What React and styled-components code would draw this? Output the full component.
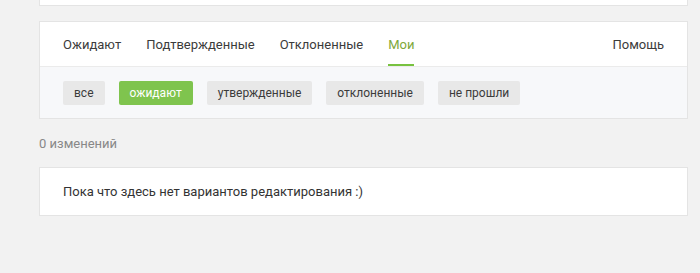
import React from 'react';
import styled, { createGlobalStyle } from 'styled-components';

const GlobalStyle = createGlobalStyle`
  html, body {
    margin: 0;
    padding: 0;
    background: #f2f2f2;
    font-family: Roboto, "Liberation Sans", Arial, sans-serif;
  }
`;

const Page = styled.div`
  width: 649px;
  margin-left: 39px;
  overflow: hidden;
`;

const Card = styled.div`
  background: #fff;
  border: 1px solid #e4e4e4;
  box-sizing: border-box;
`;

const TopCard = styled(Card)`
  height: 6px;
  border-top: none;
`;

const TabsCard = styled(Card)`
  margin-top: 15px;
`;

const TabsRow = styled.div`
  display: flex;
  align-items: stretch;
  height: 44px;
  padding: 0 23px;
  border-bottom: 1px solid #ebebeb;
`;

const Tab = styled.div`
  display: flex;
  align-items: center;
  margin-right: 25px;
  font-size: 13px;
  color: ${p => (p.$active ? '#7ea83a' : '#3b3b3b')};
  box-shadow: ${p => (p.$active ? 'inset 0 -2px 0 #78c240' : 'none')};
  padding-top: 1px;
  cursor: pointer;
`;

const HelpTab = styled(Tab)`
  margin-left: auto;
  margin-right: 0;
`;

const Filters = styled.div`
  display: flex;
  gap: 14px;
  background: #f7f8fa;
  padding: 14px 23px 13px;
`;

const Pill = styled.div`
  height: 24px;
  line-height: 24px;
  padding: 0 11px;
  border-radius: 2px;
  font-size: 12px;
  background: ${p => (p.$active ? '#7fc44e' : '#e8e8e8')};
  color: ${p => (p.$active ? '#fff' : '#3b3b3b')};
  cursor: pointer;
`;

const Counter = styled.div`
  font-size: 13px;
  color: #888;
  margin: 17px 0 0;
  height: 15px;
  line-height: 15px;
`;

const EmptyCard = styled(Card)`
  margin-top: 16px;
  height: 49px;
  display: flex;
  align-items: center;
  padding: 0 23px;
  font-size: 13px;
  color: #333;
`;

const tabs = ['Ожидают', 'Подтвержденные', 'Отклоненные', 'Мои'];
const filters = ['все', 'ожидают', 'утвержденные', 'отклоненные', 'не прошли'];

export default function App() {
  return (
    <>
      <GlobalStyle />
      <Page>
        <TopCard />
        <TabsCard>
          <TabsRow>
            {tabs.map(t => (
              <Tab key={t} $active={t === 'Мои'}>{t}</Tab>
            ))}
            <HelpTab>Помощь</HelpTab>
          </TabsRow>
          <Filters>
            {filters.map(f => (
              <Pill key={f} $active={f === 'ожидают'}>{f}</Pill>
            ))}
          </Filters>
        </TabsCard>
        <Counter>0 изменений</Counter>
        <EmptyCard>Пока что здесь нет вариантов редактирования :)</EmptyCard>
      </Page>
    </>
  );
}
